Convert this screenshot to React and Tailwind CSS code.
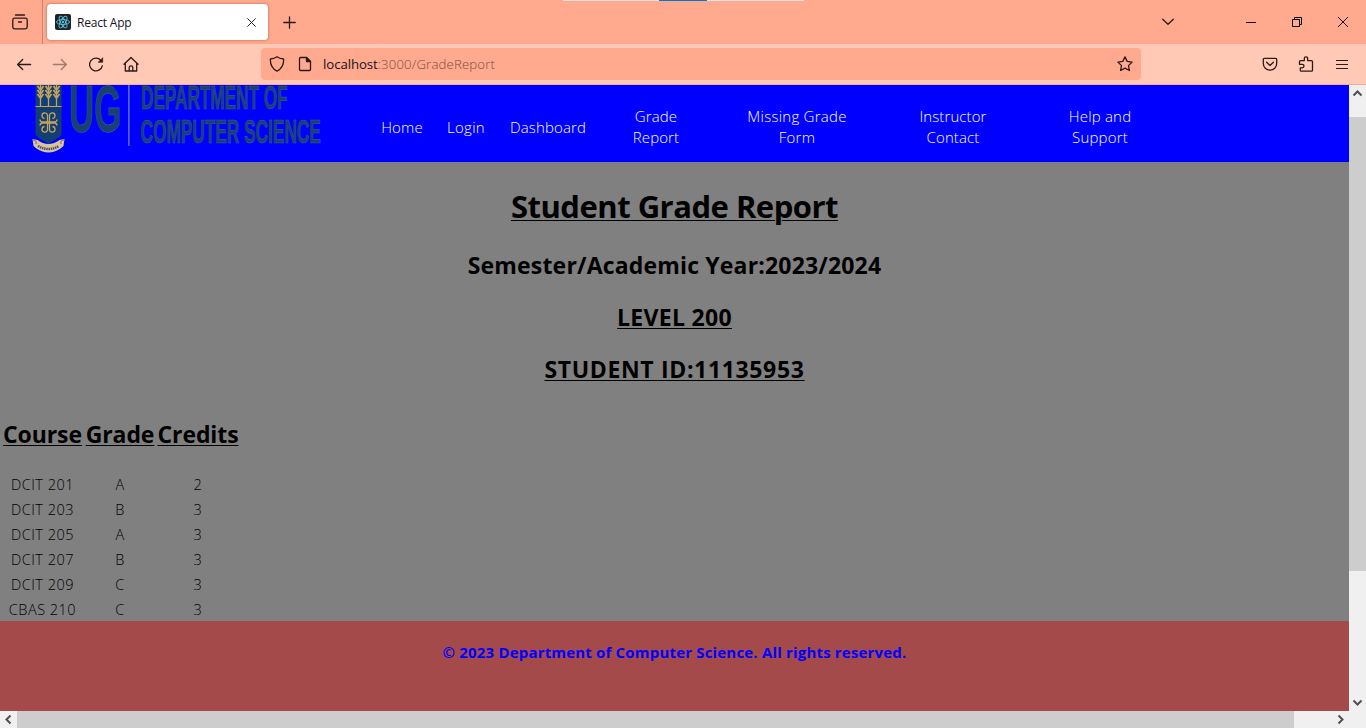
import React from "react";

const rows = [
  ["DCIT 201", "A", "2"],
  ["DCIT 203", "B", "3"],
  ["DCIT 205", "A", "3"],
  ["DCIT 207", "B", "3"],
  ["DCIT 209", "C", "3"],
  ["CBAS 210", "C", "3"],
];

function Icon({ children, className = "", w = 16, sw = 1.3 }) {
  return (
    <svg width={w} height={w} viewBox={`0 0 ${w} ${w}`} fill="none" stroke="#2b1a16" strokeWidth={sw} strokeLinecap="round" strokeLinejoin="round" className={`shrink-0 ${className}`}>
      {children}
    </svg>
  );
}

function TabStrip() {
  return (
    <div className="flex h-[44px] bg-[#ffaa8f]">
      <div className="flex h-full w-[43px] shrink-0 items-center border-r border-[#c98471] pl-3">
        <Icon>
          <path d="M3.500 1h9" />
          <rect x="0.8" y="4.200" width="14.400" height="10.600" rx="1.800" />
          <path d="M6.500 8h3" />
        </Icon>
      </div>
      <div className="ml-1 mt-1 flex h-9 w-[221px] shrink-0 items-center rounded bg-white pl-2 shadow-[0_0_3px_rgba(120,50,30,0.6)]">
        <svg width="16" height="16" viewBox="0 0 16 16" fill="none" stroke="#58c4dc" strokeWidth="0.9">
          <rect width="16" height="16" rx="2" fill="#20232a" stroke="none" />
          <ellipse cx="8" cy="8" rx="6.500" ry="2.500" />
          <ellipse cx="8" cy="8" rx="6.500" ry="2.500" transform="rotate(60 8 8)" />
          <ellipse cx="8" cy="8" rx="6.500" ry="2.500" transform="rotate(120 8 8)" />
          <circle cx="8" cy="8" r="1.200" fill="#58c4dc" stroke="none" />
        </svg>
        <span className="ml-[6px] mt-px w-[170px] whitespace-nowrap text-[12px] tracking-[-0.200px] text-[#15141a]">React App</span>
        <Icon w={9} sw={1}><path d="M.7 .7l7.600 7.600M8.300 .7L.7 8.300" /></Icon>
      </div>
      <div className="ml-[15px] mt-px flex items-center"><Icon w={13}><path d="M6.500 .8v11.400M.8 6.500h11.400" /></Icon></div>
      <div className="ml-[267px] flex h-px w-[241px] shrink-0 bg-[#e2e2e2]">
        <div className="ml-[96px] h-px w-[48px] bg-[#0078d7]" />
      </div>
      <div className="ml-[358px] flex items-center"><Icon w={12}><path d="M.7 3.300l5.300 5 5.300-5" /></Icon></div>
      <div className="ml-[72px] flex w-[10px] items-center"><div className="h-px w-[10px] bg-black" /></div>
      <div className="ml-[36px] flex items-center">
        <svg width="10" height="10" fill="none" stroke="#000" className="overflow-visible"><path d="M.5 2.500h7v7h-7zM2.500 2.500v-2h7v7h-2" /></svg>
      </div>
      <div className="ml-[36px] flex items-center">
        <svg width="10" height="10" stroke="#000" strokeWidth="0.9"><path d="M0 0l10 10M10 0L0 10" /></svg>
      </div>
    </div>
  );
}

function Toolbar() {
  return (
    <div className="flex h-[41px] items-center border-b border-[#ffaa8f] bg-[#ffc9b6]">
      <Icon className="ml-4"><path d="M14.600 8.500H1.700M6.700 3.500L1.600 8.500l5.100 5" /></Icon>
      <Icon className="ml-[20px] opacity-45"><path d="M1.400 8.500h12.900M9.300 3.500l5.100 5-5.100 5" /></Icon>
      <Icon className="ml-[20px]">
        <path d="M14.300 9.800A6.400 6.400 0 1 1 12.900 4.300" />
        <path d="M14.700 2v4.300h-4.300z" fill="#2b1a16" strokeWidth="0.600" />
      </Icon>
      <Icon className="ml-[19px]">
        <path d="M1 8.300l7-6.800 7 6.800M2.300 7.300v7.700h11.400V7.300M6.200 14.800v-3.200a1.800 1.800 0 0 1 3.600 0v3.200" />
      </Icon>
      <div className="ml-[122px] flex h-8 w-[880px] shrink-0 items-center rounded bg-[#ffaa8f] pl-2">
        <Icon><path d="M8 .8c2 1.500 4.200 2 6.600 2.200.3 5.400-1.400 9.600-6.600 12.200C2.800 12.600 1.100 8.400 1.400 3 3.800 2.800 6 2.300 8 .8z" /></Icon>
        <Icon className="ml-3">
          <path d="M3.500 1.500h6l4 4v8a1 1 0 0 1-1 1h-9a1 1 0 0 1-1-1v-11a1 1 0 0 1 1-1z" />
          <path d="M9.500 1.500v4h4z" fill="#2b1a16" />
        </Icon>
        <span className="ml-[10px] mt-[2px] w-[794px] whitespace-nowrap text-[13.200px] tracking-[-0.060px] text-[#15141a]">
          localhost<span className="font-light tracking-[0.160px] text-[#7d4a40]">:3000/GradeReport</span>
        </span>
        <Icon><path d="M8 .9l2.200 4.500 4.900.7-3.600 3.500.9 4.900L8 12.200l-4.400 2.300.9-4.900L.9 6.100l4.900-.7z" /></Icon>
      </div>
      <Icon className="ml-[121px]">
        <path d="M2.300 2.300h11.400a1 1 0 0 1 1 1V7.500a6.700 6.700 0 0 1-13.400 0V3.300a1 1 0 0 1 1-1z" />
        <path d="M4.600 6.300L8 9.400l3.400-3.100" />
      </Icon>
      <Icon className="ml-[20px]">
        <path d="M2.500 4.700h3.800V2.600a1.700 1.700 0 0 1 3.400 0v2.100h3.800a1 1 0 0 1 1 1v8.500a1 1 0 0 1-1 1H3.300a1 1 0 0 1-1-1v-2.400h2a1.700 1.700 0 0 0 0-3.400h-2.800V5.700a1 1 0 0 1 1-1z" />
      </Icon>
      <svg width="12" height="11" className="ml-[22px]" stroke="#2b1a16" strokeWidth="1.200"><path d="M0 1.500h12M0 5.500h12M0 9.500h12" /></svg>
    </div>
  );
}

function Logo() {
  return (
    <svg width="340" height="77" viewBox="0 0 340 77" className="shrink-0">
      <path d="M35.500 0h26v48c0 5-7 6-13 11-6-5-13-6-13-11z" fill="#123f73" />
      <g stroke="#c6a35b" fill="none" strokeWidth="1.300">
        <path d="M35.500 21.500h26" strokeWidth="1" />
        {[40.5, 48.5, 56.5].map((x) => (
          <g key={x}>
            <path d={`M${x} 0v21`} />
            <path d={`M${x - 3} 1l3 4 3-4M${x - 3} 5l3 4 3-4M${x - 3} 9l3 4 3-4`} strokeWidth="1.800" />
          </g>
        ))}
        <path d="M47.500 37.500V30a2.800 2.800 0 1 0-3 3.500M49.500 37.500V30a2.800 2.800 0 1 1 3 3.500M47.500 37.500V45a2.800 2.800 0 1 1-3-3.500M49.500 37.500V45a2.800 2.800 0 1 0 3-3.500M40 34.500q0 2.500 3 2.500h11q3 0 3-2.500M40 40.500q0-2.500 3-2.500h11q3 0 3 2.500" />
      </g>
      <path d="M32.500 54l5 1q11 8 22 0l5-1-1 7-3 2.500q-12 8-24 0l-3-2.500z" fill="#d8c49c" />
      <path d="M38 61q10.500 6 21 0" stroke="#46546a" strokeWidth="2.500" fill="none" strokeDasharray="1.500 .7" />
      <path d="M33 55q4 0 3 4M64 55q-4 0-3 4" stroke="#7b6545" fill="none" />
      <g fill="#174173" stroke="#3a5f94" strokeWidth="0.600" className="font-['Liberation_Sans'] font-bold">
        <text fontSize="67" transform="translate(69 47) scale(0.520 1)">UG</text>
        <text fontSize="34" transform="translate(141 24) scale(0.505 1)">DEPARTMENT OF</text>
        <text fontSize="34" transform="translate(140.500 58) scale(0.508 1)">COMPUTER SCIENCE</text>
      </g>
      <path d="M128.900 0v61" stroke="#7280ba" strokeWidth="1.300" />
    </svg>
  );
}

function Nav() {
  return (
    <nav className="flex h-[77px] shrink-0 items-start bg-[#00f] text-[15px] font-light leading-[21px] text-white">
      <Logo />
      <div className="mt-[21px] flex h-[42px] items-center whitespace-nowrap text-center">
        <span className="ml-[32px] w-[60px] tracking-[0.150px]">Home</span>
        <span className="ml-[4px] w-[60px] tracking-[0.300px]">Login</span>
        <span className="ml-[2px] w-[100px] tracking-[0.150px]">Dashboard</span>
        <span className="ml-[18px] w-[80px] tracking-[0.100px]">Grade<br />Report</span>
        <span className="ml-[36px] w-[130px] tracking-[0.250px]">Missing Grade<br />Form</span>
        <span className="ml-[51px] w-[80px] tracking-[0.100px]">Instructor<br />Contact</span>
        <span className="ml-[57px] w-[100px] tracking-[0.200px]">Help and<br />Support</span>
      </div>
    </nav>
  );
}

export default function App() {
  return (
    <div className="flex h-[728px] w-[1366px] flex-col overflow-hidden font-['Open_Sans','Noto_Sans',sans-serif]">
      <TabStrip />
      <Toolbar />
      <div className="flex h-[626px]">
        <div className="flex w-[1349px] shrink-0 flex-col bg-[#808080] text-black">
          <Nav />
          <main className="h-[459px] overflow-hidden">
            <div className="flex flex-col items-center whitespace-nowrap font-bold">
              <h1 className="mt-[23px] h-[43px] text-[31px] leading-[43px] tracking-[-0.500px] underline decoration-1 underline-offset-[2px]">Student Grade Report</h1>
              <h2 className="mt-[21px] h-8 text-[23px] leading-8 tracking-[0.170px]">Semester/Academic Year:2023/2024</h2>
              <h2 className="mt-5 h-8 text-[23px] leading-8 tracking-[0.300px] underline decoration-1 underline-offset-2">LEVEL 200</h2>
              <h2 className="mt-5 h-8 text-[23px] leading-8 tracking-[0.650px] underline decoration-1 underline-offset-2">STUDENT ID:11135953</h2>
            </div>
            <div className="mt-[33px] grid w-[240px] grid-cols-[79px_68px_80px] gap-x-1 pl-[3px] text-center text-[14.500px] font-[350]">
              {["Course", "Grade", "Credits"].map((t) => (
                <h2 key={t} className="mb-[22px] flex h-8 justify-center whitespace-nowrap text-[23px] font-bold leading-8 tracking-[-0.100px] underline decoration-1 underline-offset-2">{t}</h2>
              ))}
              {rows.flatMap((r) => r.map((c, i) => (
                <span key={r[0] + i} className="h-[25px] whitespace-nowrap leading-[25px] tracking-[0.500px]">{c}</span>
              )))}
            </div>
          </main>
          <footer className="h-[90px] bg-[#a54a4a] pt-[21px] text-center text-[15px] font-bold leading-[21px] tracking-[0.180px] text-[#00f]">
            © 2023 Department of Computer Science. All rights reserved.
          </footer>
        </div>
        <div className="flex w-[17px] flex-col items-center bg-[#f0f0f0]">
          <svg width="17" height="32" fill="none" stroke="#505050" strokeWidth="2"><path d="M4.500 10.500l4-4 4 4" /></svg>
          <div className="h-[454px] w-[17px] bg-[#cdcdcd]" />
          <svg width="17" height="17" fill="none" stroke="#505050" strokeWidth="2" className="mt-[123px]"><path d="M4.500 6.500l4 4 4-4" /></svg>
        </div>
      </div>
      <div className="flex h-[17px] bg-[#f0f0f0]">
        <svg width="17" height="17" fill="none" stroke="#505050" strokeWidth="2"><path d="M10.500 4.500l-4 4 4 4" /></svg>
        <div className="h-[17px] w-[1277px] bg-[#cdcdcd]" />
        <svg width="17" height="17" fill="none" stroke="#505050" strokeWidth="2" className="ml-[38px]"><path d="M6.500 4.500l4 4-4 4" /></svg>
      </div>
    </div>
  );
}
